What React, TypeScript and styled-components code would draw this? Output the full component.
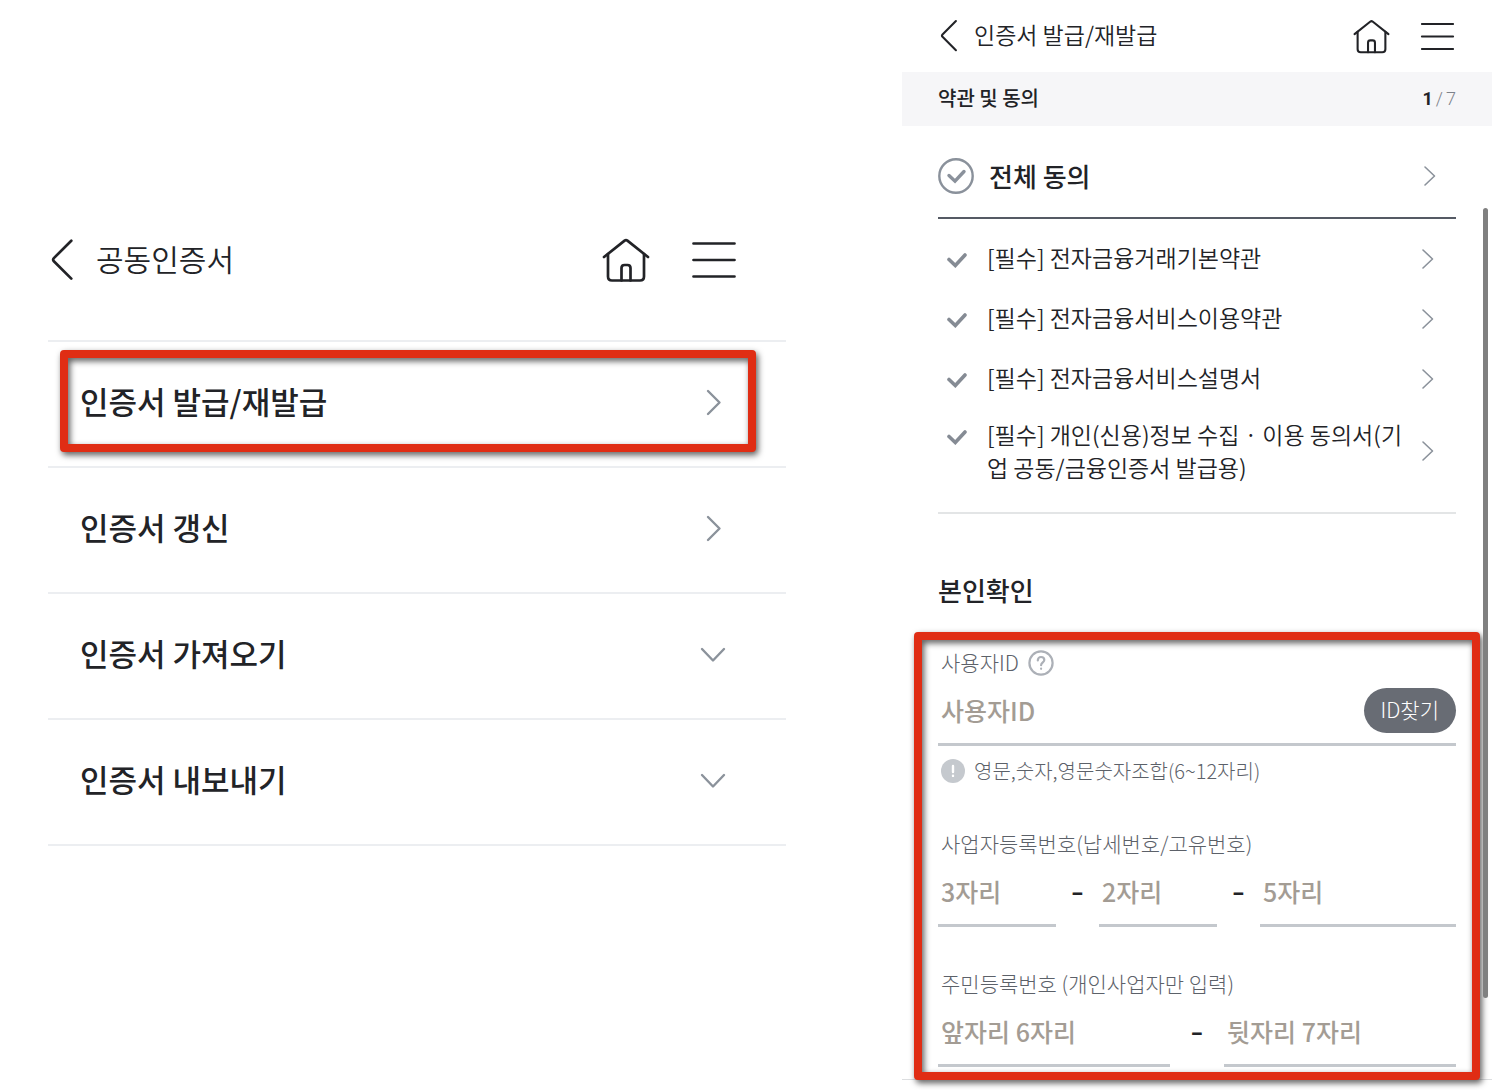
import React from "react";
import styled, { createGlobalStyle, css } from "styled-components";

const GlobalStyle = createGlobalStyle`
  *, *::before, *::after { box-sizing: border-box; }
  body {
    margin: 0;
    background: #fff;
    color: #222327;
    font-family: "Noto Sans CJK KR", "Noto Sans", sans-serif;
    font-weight: 350;
  }
  button, input { font: inherit; color: inherit; }
  button { border: 0; padding: 0; background: none; cursor: pointer; }
  h1, h2, p, ul { margin: 0; padding: 0; }
  ul { list-style: none; }
`;

const Page = styled.div`
  display: grid;
  grid-template-columns: 902fr 590fr;
  min-height: 100vh;
`;

const MenuScreen = styled.section`
  padding: 228px 116px 0 48px;
`;

const AgreementScreen = styled.section`
  position: relative;
`;

const HeaderBar = styled.header<{ $compact?: boolean }>`
  display: flex;
  align-items: center;
  ${(p) =>
    p.$compact
      ? css`
          height: 72px;
          gap: 16px;
          padding: 0 37px 0 36px;
        `
      : css`
          height: 64px;
          gap: 22px;
          margin-bottom: 48px;
          padding-right: 49px;
        `}
`;

const HeaderTitle = styled.h1<{ $compact?: boolean }>`
  flex: 1;
  padding-bottom: 4px;
  font-size: ${(p) => (p.$compact ? 23 : 30)}px;
  line-height: ${(p) => (p.$compact ? 32 : 44)}px;
  font-weight: inherit;
`;

const HeaderActions = styled.nav<{ $compact?: boolean }>`
  display: flex;
  align-items: center;
  gap: ${(p) => (p.$compact ? 30 : 41)}px;
`;

const IconButton = styled.button`
  display: flex;
  align-items: center;
  justify-content: center;
`;

const Highlight = styled.div<{ $inset: string }>`
  position: absolute;
  inset: ${(p) => p.$inset};
  border: 8px solid #e02d14;
  border-radius: 4px;
  filter: drop-shadow(2px 3px 3px rgba(0, 0, 0, 0.65));
  pointer-events: none;
`;

const MenuList = styled.ul`
  border-top: 2px solid #eceef1;
`;

const MenuItem = styled.li`
  position: relative;
  border-bottom: 2px solid #eceef1;
`;

const MenuButton = styled.button`
  display: flex;
  align-items: center;
  justify-content: space-between;
  width: 100%;
  height: 124px;
  padding: 0 59px 4px 32px;
  font-size: 31px;
  line-height: 44px;
  font-weight: 500;
  text-align: left;
`;

const MenuLabel = styled.span`
  padding-bottom: 2px;
`;

const StepBar = styled.div`
  display: flex;
  align-items: center;
  justify-content: space-between;
  height: 54px;
  padding: 0 36px;
  background: #f6f6f8;
`;

const StepTitle = styled.h2`
  padding-bottom: 3px;
  font-size: 20px;
  line-height: 30px;
  font-weight: 500;
`;

const StepCount = styled.p`
  display: flex;
  gap: 3px;
  font-family: Roboto, sans-serif;
  font-size: 18px;
  line-height: 30px;
  font-weight: 300;
  color: #7d828b;

  strong {
    color: #222327;
    font-weight: 700;
  }
`;

const Content = styled.main`
  padding: 0 36px;
`;

const AgreeAll = styled.div`
  display: flex;
  align-items: center;
  height: 93px;
  padding: 8px 18px 0 0;
  border-bottom: 2px solid #555a64;
`;

const AgreeAllLabel = styled.label`
  display: flex;
  flex: 1;
  align-items: center;
  gap: 15px;
  font-size: 26px;
  line-height: 36px;
  font-weight: 500;
`;

const TermsList = styled.ul`
  padding: 10px 0 19px;
  border-bottom: 2px solid #e3e5e6;
`;

const TermsRow = styled.li`
  display: flex;
  align-items: center;
  min-height: 60px;
  padding: 9px 20px 9px 8px;
`;

const TermsLabel = styled.label`
  display: flex;
  flex: 1;
  gap: 19px;
  padding-right: 16px;
  font-size: 23px;
  line-height: 33px;
  word-break: break-all;
`;

const CheckBox = styled.span<{ $size: number }>`
  position: relative;
  display: flex;
  flex: none;
  align-items: center;
  justify-content: center;
  width: ${(p) => p.$size}px;
  height: 36px;

  input {
    position: absolute;
    inset: 0;
    width: 100%;
    height: 100%;
    margin: 0;
    opacity: 0;
  }
`;

const SectionTitle = styled.h2`
  padding: 58px 0 38px;
  font-size: 26px;
  line-height: 36px;
  font-weight: 500;
`;

const Form = styled.form`
  position: relative;
  display: grid;
  gap: 42px;
  margin-top: 2px;
  font-weight: 300;
`;

const Field = styled.div`
  display: grid;
`;

const FieldLabel = styled.label`
  padding-left: 3px;
  font-size: 21px;
  line-height: 28px;
  color: #5c6169;
`;

const LabelRow = styled.div`
  display: flex;
  align-items: center;
  gap: 9px;
`;

const Underline = styled.div`
  display: flex;
  align-items: center;
  min-width: 0;
  border-bottom: 3px solid #c4c8cd;
`;

const TextInput = styled.input`
  flex: 1;
  width: 100%;
  min-width: 0;
  height: 67px;
  padding: 0 3px;
  border: 0;
  outline: 0;
  background: transparent;
  font-size: 25px;
  font-weight: 500;

  &::placeholder {
    color: #a39c94;
    opacity: 1;
  }
`;

const FindButton = styled.button`
  height: 45px;
  margin-top: 2px;
  padding: 0 17px 4px;
  border-radius: 23px;
  background: #686c74;
  color: #fff;
  font-size: 21px;
  line-height: 30px;
`;

const Hint = styled.p`
  display: flex;
  align-items: center;
  gap: 9px;
  margin-top: 11px;
  padding: 0 0 2px 3px;
  font-size: 20px;
  line-height: 28px;
  color: #5c6169;
`;

const Parts = styled.div<{ $columns: string }>`
  display: grid;
  grid-template-columns: ${(p) => p.$columns};
`;

const Dash = styled.span`
  align-self: center;
  font-family: Inter, sans-serif;
  font-size: 30px;
  line-height: 32px;
  font-weight: 400;
  text-align: center;
`;

const BottomRule = styled.hr`
  margin: 12px 0 0;
  border: 0;
  border-top: 1px solid #dcdee0;
`;

const ScrollThumb = styled.div`
  position: absolute;
  top: 208px;
  right: 4px;
  width: 5px;
  height: 790px;
  border-radius: 3px;
  background: #808080;
`;

const line = {
  fill: "none",
  stroke: "currentColor",
  strokeLinecap: "round",
  strokeLinejoin: "round",
} as const;

function BackIcon({ size }: { size: number }) {
  return (
    <svg width={size} height={(size * 5) / 3} viewBox="0 0 24 40" aria-hidden="true" {...line} strokeWidth="2.5">
      <path d="M21.500 2.500 5.400 18.600Q4 20 5.400 21.400L21.500 37.500" />
    </svg>
  );
}

function HomeIcon({ size }: { size: number }) {
  return (
    <svg width={size} height={size} viewBox="0 0 48 48" aria-hidden="true" {...line} strokeWidth="2.7">
      <path d="M2 21 22.600 4.600Q24 3.600 25.400 4.600L46 21" />
      <path d="M6 18v22.500q0 4 4 4h28q4 0 4-4V18" />
      <path d="M19.500 44.500V32q0-3 3-3h3q3 0 3 3v12.500" />
    </svg>
  );
}

function MenuIcon({ size }: { size: number }) {
  return (
    <svg width={size} height={size} viewBox="0 0 46 46" aria-hidden="true" {...line} strokeWidth="2.7">
      <path d="M2.500 6.500h41M2.500 23h41M2.500 39.500h41" />
    </svg>
  );
}

function Chevron({ down, large }: { down?: boolean; large?: boolean }) {
  if (down) {
    return (
      <svg width="28" height="28" viewBox="0 0 28 28" aria-hidden="true" {...line} stroke="#8b929b" strokeWidth="2.4">
        <path d="M3 9 14 20.500 25 9" />
      </svg>
    );
  }
  return large ? (
    <svg width="28" height="28" viewBox="0 0 28 28" aria-hidden="true" {...line} stroke="#8b929b" strokeWidth="2.4">
      <path d="M9 3 20.500 14.500 9 26" />
    </svg>
  ) : (
    <svg width="16" height="22" viewBox="0 0 16 22" aria-hidden="true" {...line} stroke="#8b929b" strokeWidth="1.6">
      <path d="M3 2l9.500 9L3 20" />
    </svg>
  );
}

function TickIcon() {
  return (
    <svg width="22" height="18" viewBox="0 0 22 18" aria-hidden="true" {...line} stroke="#858b94" strokeWidth="3.6">
      <path d="M3 9.500l6.300 6L19 5" strokeLinejoin="miter" />
    </svg>
  );
}

function CircleTickIcon() {
  return (
    <svg width="36" height="36" viewBox="0 0 36 36" aria-hidden="true" {...line} stroke="#8a919b">
      <circle cx="18" cy="18" r="16.700" strokeWidth="2.4" />
      <path d="M11 17.500l6 5.700 9-9.700" strokeWidth="3.4" strokeLinejoin="miter" />
    </svg>
  );
}

function HelpIcon() {
  return (
    <svg width="26" height="28" viewBox="0 -2 26 28" aria-hidden="true" {...line} stroke="#acb0b7" strokeWidth="2.2">
      <circle cx="13" cy="13" r="11.600" />
      <path d="M9.800 10.400C9.800 8.300 11.200 7 13 7s3.300 1.200 3.300 3c0 2.200-3.200 2.600-3.200 5.200M13.100 18.700v.1" />
    </svg>
  );
}

function InfoIcon() {
  return (
    <svg width="24" height="24" viewBox="0 0 24 24" aria-hidden="true" {...line} stroke="#fff" strokeWidth="2.4">
      <circle cx="12" cy="12" r="12" fill="#c5c9ce" stroke="none" />
      <path d="M12 7v6M12 16.800v.1" />
    </svg>
  );
}

function Header({ title, compact }: { title: string; compact?: boolean }) {
  return (
    <HeaderBar $compact={compact}>
      <IconButton type="button" aria-label="뒤로">
        <BackIcon size={compact ? 20 : 26} />
      </IconButton>
      <HeaderTitle $compact={compact}>{title}</HeaderTitle>
      <HeaderActions $compact={compact}>
        <IconButton type="button" aria-label="홈">
          <HomeIcon size={compact ? 37 : 48} />
        </IconButton>
        <IconButton type="button" aria-label="전체 메뉴">
          <MenuIcon size={compact ? 35 : 46} />
        </IconButton>
      </HeaderActions>
    </HeaderBar>
  );
}

const menu = [
  { label: "인증서 발급/재발급", down: false, marked: true },
  { label: "인증서 갱신", down: false },
  { label: "인증서 가져오기", down: true },
  { label: "인증서 내보내기", down: true },
];

const terms = [
  "[필수] 전자금융거래기본약관",
  "[필수] 전자금융서비스이용약관",
  "[필수] 전자금융서비스설명서",
  "[필수] 개인(신용)정보 수집 · 이용 동의서(기업 공동/금융인증서 발급용)",
];

export default function App() {
  return (
    <>
      <GlobalStyle />
      <Page>
        <MenuScreen>
          <Header title="공동인증서" />
          <MenuList>
            {menu.map((item) => (
              <MenuItem key={item.label}>
                <MenuButton type="button">
                  <MenuLabel>{item.label}</MenuLabel>
                  <Chevron large down={item.down} />
                </MenuButton>
                {item.marked && <Highlight $inset="8px 30px 14px 12px" />}
              </MenuItem>
            ))}
          </MenuList>
        </MenuScreen>

        <AgreementScreen>
          <Header title="인증서 발급/재발급" compact />
          <StepBar>
            <StepTitle>약관 및 동의</StepTitle>
            <StepCount>
              <strong>1</strong>
              <span>/</span>
              <span>7</span>
            </StepCount>
          </StepBar>
          <Content>
            <AgreeAll>
              <AgreeAllLabel>
                <CheckBox $size={36}>
                  <CircleTickIcon />
                  <input type="checkbox" />
                </CheckBox>
                전체 동의
              </AgreeAllLabel>
              <IconButton type="button" aria-label="전체 동의 보기">
                <Chevron />
              </IconButton>
            </AgreeAll>
            <TermsList>
              {terms.map((term) => (
                <TermsRow key={term}>
                  <TermsLabel>
                    <CheckBox $size={22}>
                      <TickIcon />
                      <input type="checkbox" />
                    </CheckBox>
                    {term}
                  </TermsLabel>
                  <IconButton type="button" aria-label="약관 보기">
                    <Chevron />
                  </IconButton>
                </TermsRow>
              ))}
            </TermsList>

            <SectionTitle>본인확인</SectionTitle>
            <Form onSubmit={(e) => e.preventDefault()}>
              <Field>
                <LabelRow>
                  <FieldLabel htmlFor="user-id">사용자ID</FieldLabel>
                  <IconButton type="button" aria-label="도움말">
                    <HelpIcon />
                  </IconButton>
                </LabelRow>
                <Underline>
                  <TextInput id="user-id" placeholder="사용자ID" />
                  <FindButton type="button">ID찾기</FindButton>
                </Underline>
                <Hint>
                  <InfoIcon />
                  영문,숫자,영문숫자조합(6~12자리)
                </Hint>
              </Field>

              <Field>
                <FieldLabel htmlFor="biz-1">사업자등록번호(납세번호/고유번호)</FieldLabel>
                <Parts $columns="118fr 43px 118fr 43px 196fr">
                  <Underline>
                    <TextInput id="biz-1" placeholder="3자리" />
                  </Underline>
                  <Dash>-</Dash>
                  <Underline>
                    <TextInput aria-label="사업자등록번호 2자리" placeholder="2자리" />
                  </Underline>
                  <Dash>-</Dash>
                  <Underline>
                    <TextInput aria-label="사업자등록번호 5자리" placeholder="5자리" />
                  </Underline>
                </Parts>
              </Field>

              <Field>
                <FieldLabel htmlFor="rrn-1">주민등록번호 (개인사업자만 입력)</FieldLabel>
                <Parts $columns="1fr 54px 1fr">
                  <Underline>
                    <TextInput id="rrn-1" placeholder="앞자리 6자리" />
                  </Underline>
                  <Dash>-</Dash>
                  <Underline>
                    <TextInput aria-label="주민등록번호 뒷자리" placeholder="뒷자리 7자리" />
                  </Underline>
                </Parts>
              </Field>
              <Highlight $inset="-16px -24px -13px -24px" />
            </Form>
          </Content>
          <BottomRule />
          <ScrollThumb />
        </AgreementScreen>
      </Page>
    </>
  );
}
